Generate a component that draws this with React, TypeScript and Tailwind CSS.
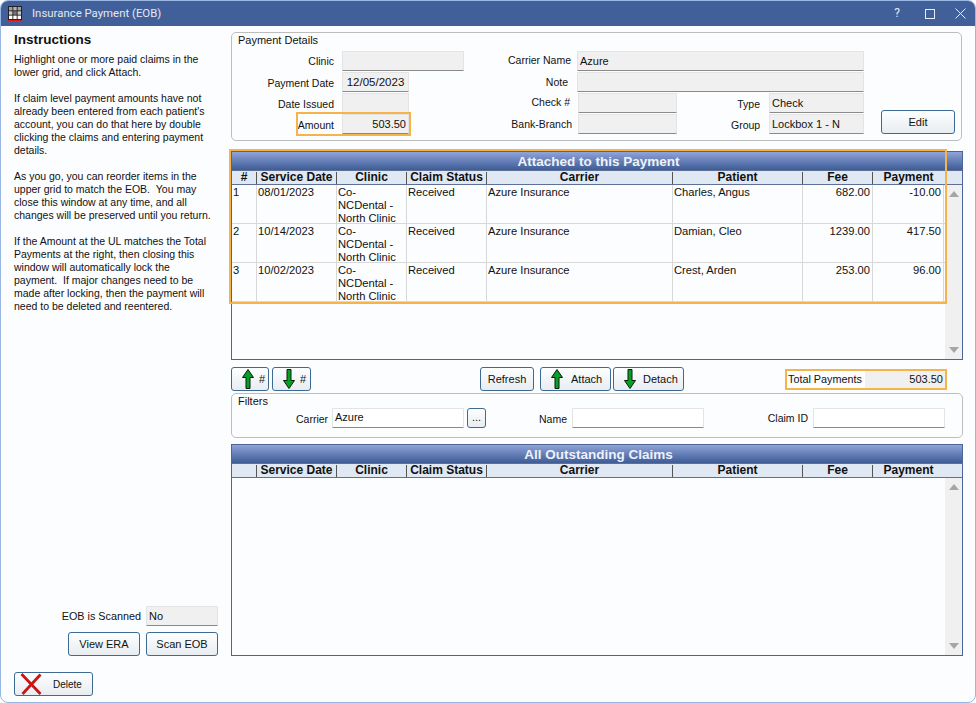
import type { ReactNode } from "react";

const COLS = "grid grid-cols-[25px_80px_70px_80px_186px_130px_70px_71px]";

const headers = ["#", "Service Date", "Clinic", "Claim Status", "Carrier", "Patient", "Fee", "Payment"];

const rows = [
  ["1", "08/01/2023", "Received", "Azure Insurance", "Charles, Angus", "682.00", "-10.00"],
  ["2", "10/14/2023", "Received", "Azure Insurance", "Damian, Cleo", "1239.00", "417.50"],
  ["3", "10/02/2023", "Received", "Azure Insurance", "Crest, Arden", "253.00", "96.00"],
];

function UpArrow() {
  return (
    <svg width="12" height="20" viewBox="0 0 12 20" className="shrink-0">
      <path d="M6 .5 11.5 8.5H8V19.5H4V8.5H.5z" fill="#04a024" stroke="#0c1a0c" strokeWidth="1" />
    </svg>
  );
}

function DownArrow() {
  return (
    <svg width="12" height="20" viewBox="0 0 12 20" className="shrink-0">
      <path d="M6 19.5 11.5 11.5H8V.5H4V11.5H.5z" fill="#04a024" stroke="#0c1a0c" strokeWidth="1" />
    </svg>
  );
}

function Btn({ className, children }: { className: string; children: ReactNode }) {
  return (
    <div
      className={`flex items-center justify-center whitespace-nowrap rounded-[3px] border border-[#3c6a92] bg-gradient-to-b from-[#fdfeff] to-[#e8edf1] text-[11px] text-[#111] ${className}`}
    >
      {children}
    </div>
  );
}

function Field({ className, children }: { className: string; children?: ReactNode }) {
  return (
    <div
      className={`flex items-center truncate rounded-[1px] border border-[#e4e4e4] border-b-[#8a8a8a] bg-[#f0f0f0] px-[2px] text-[11px] text-[#111] ${className}`}
    >
      {children}
    </div>
  );
}

function Group({ title, className, children }: { title: string; className: string; children: ReactNode }) {
  return (
    <div className={`relative rounded-[5px] border border-[#bdbdbd] ${className}`}>
      <div className="absolute left-[6px] top-px text-[11px] leading-[13px] text-[#111]">{title}</div>
      {children}
    </div>
  );
}

function GridHead({ title, showNumber }: { title: string; showNumber: boolean }) {
  return (
    <>
      <div className="h-[19px] border-t border-t-[#4c6597] bg-gradient-to-b from-[#8fa4da] to-[#3e5c95] pl-[3px] text-center text-[13.5px] font-bold leading-[19px] text-[#eef2fb]">
        {title}
      </div>
      <div className={`${COLS} h-[15px] border-y border-y-[#5d7096] bg-[#dfe8f3] pr-[18px] text-[12px] font-bold leading-[13px] text-[#111]`}>
        {headers.map((h, i) => (
          <div key={h} className="flex items-center">
            <div className="flex-1 text-center">{i === 0 && !showNumber ? "" : h}</div>
            {i < 7 && <div className="h-[12px] w-px bg-[#555]" />}
          </div>
        ))}
      </div>
    </>
  );
}

function ScrollBar({ className }: { className: string }) {
  return (
    <div className={`flex w-[17px] flex-col items-center justify-between bg-[#f0f0f0] py-[6px] ${className}`}>
      <div className="h-0 w-0 border-x-[5px] border-b-[6px] border-x-transparent border-b-[#a6a6a6]" />
      <div className="h-0 w-0 border-x-[5px] border-t-[6px] border-x-transparent border-t-[#a6a6a6]" />
    </div>
  );
}

function Row({ row }: { row: string[] }) {
  const cell = "border-r border-r-[#d8d8d8] pl-px pt-[1px]";
  return (
    <div className={`${COLS} h-[39px] border-b border-b-[#d8d8d8] text-[11.2px] text-[#111]`}>
      <div className={cell}>{row[0]}</div>
      <div className={cell}>{row[1]}</div>
      <div className={cell}>
        Co-
        <br />
        NCDental -
        <br />
        North Clinic
      </div>
      <div className={cell}>{row[2]}</div>
      <div className={cell}>{row[3]}</div>
      <div className={cell}>{row[4]}</div>
      <div className={`${cell} pr-[2px] text-right`}>{row[5]}</div>
      <div className={`${cell} pr-[2px] text-right`}>{row[6]}</div>
    </div>
  );
}

function Instructions() {
  return (
    <div className="whitespace-nowrap text-[10.5px] text-[#111]">
      <div className="pb-[5px] text-[13.5px] font-bold leading-[16px]">Instructions</div>
      <p>
        Highlight one or more paid claims in the
        <br />
        lower grid, and click Attach.
      </p>
      <p className="mt-[13px]">
        If claim level payment amounts have not
        <br />
        already been entered from each patient's
        <br />
        account, you can do that here by double
        <br />
        clicking the claims and entering payment
        <br />
        details.
      </p>
      <p className="mt-[13px]">
        As you go, you can reorder items in the
        <br />
        upper grid to match the EOB. &nbsp;You may
        <br />
        close this window at any time, and all
        <br />
        changes will be preserved until you return.
      </p>
      <p className="mt-[13px]">
        If the Amount at the UL matches the Total
        <br />
        Payments at the right, then closing this
        <br />
        window will automatically lock the
        <br />
        payment. &nbsp;If major changes need to be
        <br />
        made after locking, then the payment will
        <br />
        need to be deleted and reentered.
      </p>
    </div>
  );
}

export default function App() {
  return (
    <div className="flex h-[703px] w-[976px] flex-col overflow-hidden rounded-[8px] border border-[#9ab7e3] bg-[#fcfdfe] font-['Liberation_Sans',Arial,sans-serif] text-[10.5px] leading-[13px] text-[#111]">
      {/* title bar */}
      <div className="flex h-[25px] shrink-0 items-center bg-[#41609a] pl-[7px] pr-[9px] text-[#e3e8f2]">
        <svg width="14" height="15" viewBox="0 0 14 15" className="shrink-0">
          <rect width="14" height="14" fill="#222" />
          <rect y="14" width="14" height="1" fill="#e01818" />
          <rect x="1" y="1" width="3.4" height="3.4" fill="#a0a0a0" />
          <rect x="5.3" y="1" width="3.4" height="3.4" fill="#b4b4b4" />
          <rect x="9.6" y="1" width="3.4" height="3.4" fill="#a0a0a0" />
          <rect x="1" y="5.3" width="3.4" height="3.4" fill="#c8c8c8" />
          <rect x="5.3" y="5.3" width="3.4" height="3.4" fill="#777" />
          <rect x="9.6" y="5.3" width="3.4" height="3.4" fill="#c8c8c8" />
          <rect x="1" y="9.6" width="3.4" height="3.4" fill="#fff" />
          <rect x="5.3" y="9.6" width="3.4" height="3.4" fill="#fff" />
          <rect x="9.6" y="9.6" width="3.4" height="3.4" fill="#fff" />
        </svg>
        <div className="ml-[10px] font-['Roboto',sans-serif] text-[11.4px]">Insurance Payment (EOB)</div>
        <div className="ml-auto flex items-center">
          <div className="font-['Roboto',sans-serif] text-[12px]">?</div>
          <div className="ml-[25px] h-[10px] w-[10px] border border-[#e8ecf4]" />
          <svg width="11" height="11" viewBox="0 0 11 11" className="ml-[20px]">
            <path d="M.5.5l10 10M10.5.5l-10 10" stroke="#e8ecf4" strokeWidth="1" />
          </svg>
        </div>
      </div>

      <div className="flex min-h-0 flex-1">
        {/* left column */}
        <div className="flex w-[230px] shrink-0 flex-col pl-[13px] pr-[13px] pt-[6px]">
          <Instructions />
          <div className="mt-auto flex items-center justify-end gap-[5px]">
            <span className="whitespace-nowrap text-[10.8px]">EOB is Scanned</span>
            <Field className="h-[20px] w-[72px]">No</Field>
          </div>
          <div className="mt-[6px] flex justify-end gap-[6px]">
            <Btn className="h-[24px] w-[72px]">View ERA</Btn>
            <Btn className="h-[24px] w-[72px]">Scan EOB</Btn>
          </div>
          <Btn className="mb-[6px] mt-[16px] h-[24px] w-[79px] !justify-start gap-[11px] pl-[5px] !text-[10px]">
            <svg width="22" height="22" viewBox="0 0 22 22" className="shrink-0">
              <path d="M1.5 1 20.5 21M20.5 1.5 2.5 21" stroke="#c81616" strokeWidth="2.8" fill="none" />
            </svg>
            Delete
          </Btn>
        </div>

        {/* right column */}
        <div className="flex w-[732px] shrink-0 flex-col pt-[6px]">
          <Group title="Payment Details" className="flex h-[109px] w-[731px] items-end pb-[6px]">
            <div className="flex w-[232px] shrink-0 flex-col gap-px">
              <div className="flex h-[20px] items-center">
                <span className="w-[102px] text-right">Clinic</span>
                <Field className="ml-[8px] h-[20px] w-[122px]" />
              </div>
              <div className="flex h-[20px] items-center">
                <span className="w-[102px] pt-[2px] text-right">Payment Date</span>
                <Field className="ml-[8px] h-[20px] w-[67px] justify-center !text-[11.5px]">12/05/2023</Field>
              </div>
              <div className="flex h-[20px] items-center">
                <span className="w-[102px] pt-[2px] text-right">Date Issued</span>
                <Field className="ml-[8px] h-[20px] w-[67px]" />
              </div>
              <div className="flex h-[20px] items-center">
                <span className="w-[102px] pt-[2px] text-right">Amount</span>
                <Field className="ml-[8px] h-[20px] w-[67px] justify-end">503.50</Field>
              </div>
            </div>
            <div className="ml-[26px] flex w-[374px] shrink-0 flex-col gap-px">
              <div className="flex h-[20px] items-center">
                <span className="w-[81px] shrink-0 pb-[2px] text-right">Carrier Name</span>
                <Field className="ml-[6px] h-[20px] w-[287px]">Azure</Field>
              </div>
              <div className="flex h-[20px] items-center">
                <span className="w-[78px] shrink-0 text-right">Note</span>
                <Field className="ml-[9px] h-[20px] w-[287px]" />
              </div>
              <div className="flex h-[20px] items-center">
                <span className="w-[80px] shrink-0 pb-[2px] text-right">Check #</span>
                <Field className="ml-[8px] h-[20px] w-[99px]" />
                <span className="ml-[54px] w-[29px] shrink-0 pt-[2px] text-right">Type</span>
                <Field className="ml-[9px] h-[20px] w-[95px]">Check</Field>
              </div>
              <div className="flex h-[20px] items-center">
                <span className="w-[82px] shrink-0 text-right">Bank-Branch</span>
                <Field className="ml-[6px] h-[20px] w-[99px]" />
                <span className="ml-[54px] w-[29px] shrink-0 pt-[2px] text-right">Group</span>
                <Field className="ml-[9px] h-[20px] w-[95px]">Lockbox 1 - N</Field>
              </div>
            </div>
            <Btn className="ml-[17px] h-[24px] w-[74px]">Edit</Btn>
            {/* orange highlight round Amount */}
            <div className="pointer-events-none absolute left-[64px] top-[79px] h-[24px] w-[115px] border-2 border-[#f5b34a]" />
          </Group>

          {/* attached grid */}
          <div className="relative mt-[10px] flex h-[209px] w-[732px] flex-col border border-t-0 border-[#4c6597]">
            <GridHead title="Attached to this Payment" showNumber />
            <div className="flex min-h-0 flex-1">
              <div className="w-[713px]">
                {rows.map((r) => (
                  <Row key={r[0]} row={r} />
                ))}
              </div>
              <ScrollBar className="ml-auto" />
            </div>
            <div className="pointer-events-none absolute left-[-3px] top-[-2px] h-[155px] w-[718px] border-2 border-[#f5b34a]" />
          </div>

          {/* arrows and attach row */}
          <div className="mt-[7px] flex h-[24px] w-[732px] items-center">
            <Btn className="h-[24px] w-[38px] !justify-start gap-[5px] pl-[10px]">
              <UpArrow />#
            </Btn>
            <Btn className="ml-[3px] h-[24px] w-[39px] !justify-start gap-[5px] pl-[10px]">
              <DownArrow />#
            </Btn>
            <Btn className="ml-[169px] h-[24px] w-[54px]">Refresh</Btn>
            <Btn className="ml-[6px] h-[24px] w-[71px] !justify-start gap-[8px] pl-[10px]">
              <UpArrow />
              Attach
            </Btn>
            <Btn className="ml-[2px] h-[24px] w-[71px] !justify-start gap-[7px] pl-[10px]">
              <DownArrow />
              Detach
            </Btn>
            <div className="ml-[101px] flex h-[21px] w-[162px] items-center whitespace-nowrap border-2 border-[#f5b34a] pl-[1px] text-[10.8px]">
              <span className="w-[77px] shrink-0">Total Payments</span>
              <div className="flex h-full flex-1 items-center justify-end bg-[#f0f0f0] pr-[2px] text-[11px]">503.50</div>
            </div>
          </div>

          {/* filters */}
          <Group title="Filters" className="mt-[2px] flex h-[45px] w-[732px] items-center whitespace-nowrap pt-[4px]">
            <span className="ml-[64px] w-[32px] shrink-0 pt-[3px] text-right">Carrier</span>
            <Field className="ml-[4px] h-[20px] w-[132px] !bg-white">Azure</Field>
            <Btn className="ml-[3px] h-[20px] w-[19px]">...</Btn>
            <span className="ml-[51px] w-[30px] shrink-0 pt-[3px] text-right">Name</span>
            <Field className="ml-[5px] h-[20px] w-[132px] !bg-white" />
            <span className="ml-[59px] w-[45px] shrink-0 pt-[2px] text-right">Claim ID</span>
            <Field className="ml-[5px] h-[20px] w-[132px] !bg-white" />
          </Group>

          {/* outstanding grid */}
          <div className="mt-[6px] flex h-[212px] w-[732px] flex-col border border-t-0 border-[#4c6597]">
            <GridHead title="All Outstanding Claims" showNumber={false} />
            <div className="flex min-h-0 flex-1 justify-end">
              <ScrollBar className="" />
            </div>
          </div>
        </div>
      </div>
    </div>
  );
}
